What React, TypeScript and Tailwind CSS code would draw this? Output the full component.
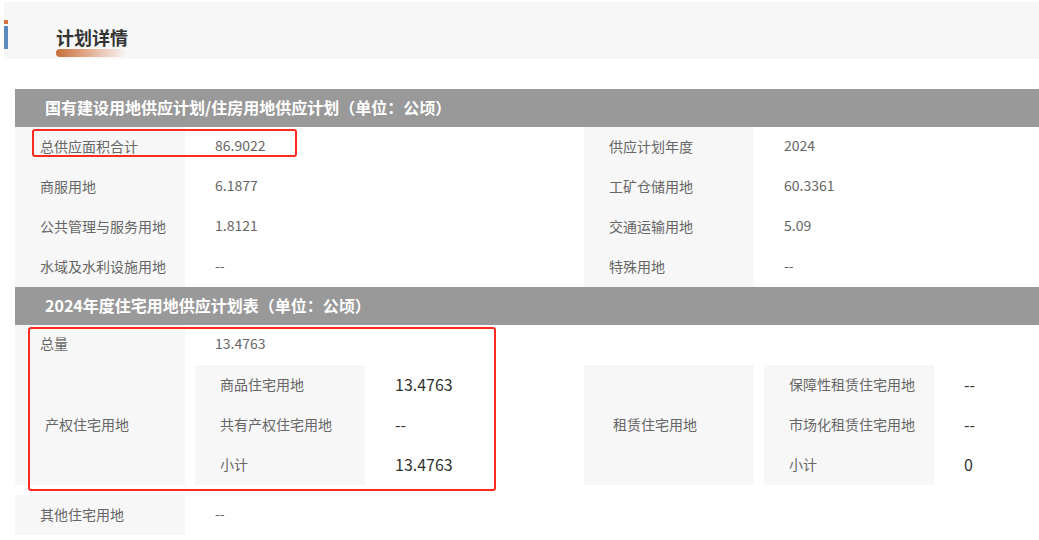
const font = "font-['Noto_Sans_CJK_SC',sans-serif]";

function SectionHeader({ title }: { title: string }) {
  return (
    <div className="h-[38px] bg-[#999999] flex items-center pl-[30px] pb-[2px] text-white text-[16px] font-bold">
      {title}
    </div>
  );
}

function Pair({ label, value }: { label: string; value: string }) {
  return (
    <>
      <div className="h-[40px] bg-[#f7f7f7] flex items-center pl-[25px] pb-[2px] text-[14px] text-[#666]">
        {label}
      </div>
      <div className="h-[40px] flex items-center pl-[30px] pb-[3px] text-[14px] text-[#666]">
        {value}
      </div>
    </>
  );
}

function SubRows({ rows }: { rows: [string, string][] }) {
  return (
    <div className="flex">
      <div className="w-[170px] bg-[#f7f7f7] flex flex-col">
        {rows.map(([label]) => (
          <div key={label} className="h-[40px] flex items-center pl-[25px] pb-[2px] text-[14px] text-[#666]">
            {label}
          </div>
        ))}
      </div>
      <div className="flex flex-col">
        {rows.map(([label, value]) => (
          <div key={label} className="h-[40px] flex items-center pl-[30px] pb-[2px] text-[16px] text-[#333]">
            {value}
          </div>
        ))}
      </div>
    </div>
  );
}

export default function App() {
  return (
    <div className={`w-[1039px] h-[540px] bg-white ${font}`}>
      {/* page title */}
      <div className="mt-[2px] ml-[4px] h-[57px] bg-[#f7f7f7] flex">
        <div className="w-[4px] flex flex-col">
          <div className="mt-[18px] h-[4px] bg-[#d0753e]" />
          <div className="mt-[2px] h-[23px] bg-[#5b8ac0]" />
        </div>
        <div className="ml-[48px] pt-[23px] flex flex-col">
          <div className="text-[18px] leading-[24px] font-bold text-[#333]">计划详情</div>
          <div className="h-[8px] w-[71px] rounded-full bg-gradient-to-r from-[#c86e38] to-[#f7f7f7]" />
        </div>
      </div>

      {/* section 1 */}
      <div className="relative ml-[15px] mt-[30px]">
        <SectionHeader title="国有建设用地供应计划/住房用地供应计划（单位：公顷）" />
        <div className="grid grid-cols-[170px_399px_170px_1fr]">
          <Pair label="总供应面积合计" value="86.9022" />
          <Pair label="供应计划年度" value="2024" />
          <Pair label="商服用地" value="6.1877" />
          <Pair label="工矿仓储用地" value="60.3361" />
          <Pair label="公共管理与服务用地" value="1.8121" />
          <Pair label="交通运输用地" value="5.09" />
          <Pair label="水域及水利设施用地" value="--" />
          <Pair label="特殊用地" value="--" />
        </div>
        <div className="absolute left-[17px] top-[40px] w-[265px] h-[28px] border-2 border-[#ff2a1f] rounded-[3px]" />
      </div>

      {/* section 2 */}
      <div className="relative ml-[15px]">
        <SectionHeader title="2024年度住宅用地供应计划表（单位：公顷）" />
        <div className="flex">
          <div className="w-[170px] bg-[#f7f7f7] flex flex-col text-[14px] text-[#666]">
            <div className="h-[40px] flex items-center pl-[25px] pb-[3px]">总量</div>
            <div className="h-[120px] flex items-center pl-[30px] pb-[2px]">产权住宅用地</div>
          </div>
          <div className="w-[399px] flex flex-col">
            <div className="h-[40px] flex items-center pl-[30px] pb-[3px] text-[14px] text-[#666]">13.4763</div>
            <div className="ml-[10px]">
              <SubRows
                rows={[
                  ["商品住宅用地", "13.4763"],
                  ["共有产权住宅用地", "--"],
                  ["小计", "13.4763"],
                ]}
              />
            </div>
          </div>
          <div className="flex flex-col">
            <div className="h-[40px]" />
            <div className="flex">
              <div className="w-[170px] h-[120px] bg-[#f7f7f7] flex items-center pl-[29px] pb-[2px] text-[14px] text-[#666]">
                租赁住宅用地
              </div>
              <div className="ml-[10px]">
                <SubRows
                  rows={[
                    ["保障性租赁住宅用地", "--"],
                    ["市场化租赁住宅用地", "--"],
                    ["小计", "0"],
                  ]}
                />
              </div>
            </div>
          </div>
        </div>
        <div className="mt-[10px] grid grid-cols-[170px_1fr]">
          <Pair label="其他住宅用地" value="--" />
        </div>
        <div className="absolute left-[13px] top-[40px] w-[468px] h-[164px] border-2 border-[#ff2a1f] rounded-[3px]" />
      </div>
    </div>
  );
}
